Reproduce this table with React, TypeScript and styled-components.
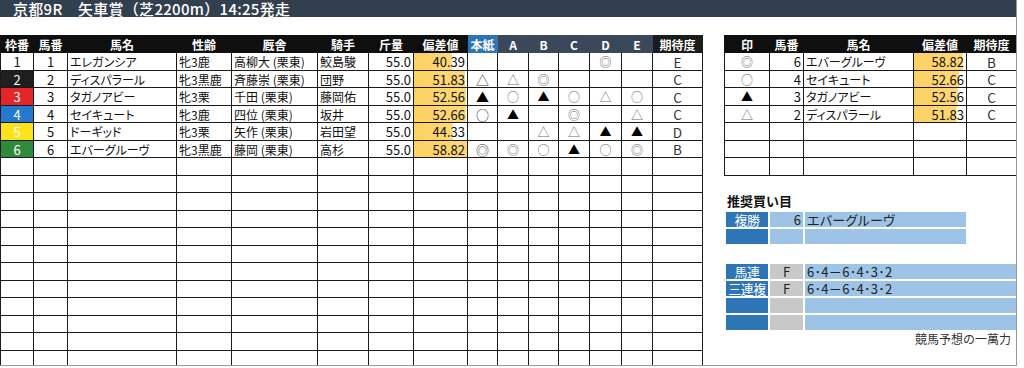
import React from 'react';
import styled, { createGlobalStyle } from 'styled-components';

const GlobalStyle = createGlobalStyle`
  body {
    margin: 0;
    background: #fff;
    font-family: "Noto Sans CJK JP", "Noto Sans", sans-serif;
  }
`;

const Frame = styled.div`
  width: 1017px;
  height: 366px;
  box-sizing: border-box;
  border-right: 1px solid #9a9a9a;
  border-bottom: 1px solid #9a9a9a;
  overflow: hidden;
  background: #fff;
`;

const TitleBar = styled.div`
  height: 17px;
  line-height: 17px;
  background: #323f4f;
  color: #fff;
  font-size: 15px;
  font-weight: 500;
  padding-left: 13px;
  letter-spacing: 0.3px;
  white-space: pre;
  overflow: hidden;
`;

const Body = styled.div`
  display: flex;
  padding-top: 18px;
  height: 331px;
  box-sizing: border-box;
`;

const Table = styled.table<{ $width: number }>`
  width: ${(p) => p.$width}px;
  table-layout: fixed;
  border-collapse: collapse;
  font-size: 12px;
  color: #111;
  font-feature-settings: 'palt';
  flex-shrink: 0;

  tbody tr:nth-child(odd) {
    height: 18px;
  }
  tbody tr:nth-child(even) {
    height: 17px;
  }
`;

const HeadRow = styled.tr`
  height: 17px;
`;

const Th = styled.th<{ $bg?: string }>`
  background: ${(p) => p.$bg || '#0f0f0f'};
  color: #fff;
  font-weight: bold;
  font-size: 12px;
  padding: 0;
  border: 1px solid ${(p) => p.$bg || '#0f0f0f'};
  line-height: 15px;
  text-align: center;
  white-space: nowrap;
  overflow: hidden;
`;

const Td = styled.td<{ $align?: string; $bg?: string; $fg?: string; $pad?: number }>`
  border: 1px solid #1a1a1a;
  padding: 0 ${(p) => p.$pad ?? 2}px;
  text-align: ${(p) => p.$align || 'left'};
  background: ${(p) => p.$bg || 'transparent'};
  color: ${(p) => p.$fg || '#111'};
  line-height: 15px;
  white-space: nowrap;
  overflow: hidden;
  font-size: 12px;
`;

const NumTd = styled(Td)`
  font-size: 13px;
  font-feature-settings: normal;
`;

const ScoreTd = styled(Td)`
  font-size: 13px;
  background-repeat: no-repeat;
  background-image: linear-gradient(to right, #fcd163, #fdd878);
`;

const Mark = styled.span<{ $big?: boolean; $solid?: boolean }>`
  font-size: ${(p) => (p.$big ? 13 : 12)}px;
  color: ${(p) => (p.$solid ? '#000' : p.$big ? '#333' : '#6a6a6a')};
  line-height: 14px;
`;

const RankTd = styled(Td)`
  font-size: 13.5px;
  line-height: 14px;
  color: #333;
`;

const RightPanel = styled.div`
  display: flex;
  flex-direction: column;
  margin-left: 21px;
  width: 292px;
`;

const SectionTitle = styled.div`
  margin-top: 16px;
  height: 18px;
  line-height: 18px;
  padding-left: 3px;
  font-size: 13px;
  font-weight: bold;
  color: #111;
`;

const BetBox = styled.div<{ $width: number; $top: number }>`
  display: grid;
  grid-template-columns: 42px 33px 1fr;
  grid-auto-rows: 15px;
  gap: 2px;
  width: ${(p) => p.$width}px;
  margin-left: 2px;
  margin-top: ${(p) => p.$top}px;
  font-size: 13px;
  font-feature-settings: 'palt';
`;

const BetLabel = styled.div`
  background: #2e75b6;
  color: #fff;
  font-size: 13px;
  line-height: 15px;
  text-align: center;
  white-space: nowrap;
  letter-spacing: -0.5px;
  overflow: hidden;
`;

const BetKey = styled.div<{ $gray?: boolean; $align?: string }>`
  background: ${(p) => (p.$gray ? '#c8c8c8' : '#9dc3e6')};
  color: #222;
  line-height: 15px;
  text-align: ${(p) => p.$align || 'center'};
  padding: 0 2px;
`;

const BetValue = styled.div`
  background: #9dc3e6;
  color: #222;
  line-height: 15px;
  padding: 0 2px;
  white-space: nowrap;
  letter-spacing: 0.3px;
`;

const Footer = styled.div`
  margin-top: auto;
  text-align: right;
  font-size: 12px;
  line-height: 14px;
  color: #333;
  padding: 0 5px 2px 0;
`;

type Horse = {
  gate: number;
  num: number;
  name: string;
  sex: string;
  stable: string;
  jockey: string;
  weight: string;
  score: string;
  bar: number;
  marks: string[];
  rank: string;
};

const horses: Horse[] = [
  { gate: 1, num: 1, name: 'エレガンシア', sex: '牝3鹿', stable: '高柳大 (栗東)', jockey: '鮫島駿', weight: '55.0', score: '40.39', bar: 72, marks: ['', '', '', '', '◎', ''], rank: 'E' },
  { gate: 2, num: 2, name: 'ディスパラール', sex: '牝3黒鹿', stable: '斉藤崇 (栗東)', jockey: '団野', weight: '55.0', score: '51.83', bar: 96, marks: ['△', '△', '◎', '', '', ''], rank: 'C' },
  { gate: 3, num: 3, name: 'タガノアビー', sex: '牝3栗', stable: '千田 (栗東)', jockey: '藤岡佑', weight: '55.0', score: '52.56', bar: 98, marks: ['▲', '○', '▲', '○', '△', '○'], rank: 'C' },
  { gate: 4, num: 4, name: 'セイキュート', sex: '牝3鹿', stable: '四位 (栗東)', jockey: '坂井', weight: '55.0', score: '52.66', bar: 98, marks: ['○', '▲', '', '◎', '', '△'], rank: 'C' },
  { gate: 5, num: 5, name: 'ドーギッド', sex: '牝3栗', stable: '矢作 (栗東)', jockey: '岩田望', weight: '55.0', score: '44.33', bar: 73, marks: ['', '', '△', '△', '▲', '▲'], rank: 'D' },
  { gate: 6, num: 6, name: 'エバーグルーヴ', sex: '牝3黒鹿', stable: '藤岡 (栗東)', jockey: '高杉', weight: '55.0', score: '58.82', bar: 100, marks: ['◎', '◎', '○', '▲', '○', '◎'], rank: 'B' },
];

const gateColors: Record<number, { bg: string; fg: string }> = {
  1: { bg: '#ffffff', fg: '#111' },
  2: { bg: '#1f1f1f', fg: '#fff' },
  3: { bg: '#e2262a', fg: '#fff' },
  4: { bg: '#2677d0', fg: '#fff' },
  5: { bg: '#fde21c', fg: '#fff' },
  6: { bg: '#2f8a3b', fg: '#fff' },
};

const picks = [
  { mark: '◎', num: 6, name: 'エバーグルーヴ', score: '58.82', bar: 94, rank: 'B' },
  { mark: '○', num: 4, name: 'セイキュート', score: '52.66', bar: 87, rank: 'C' },
  { mark: '▲', num: 3, name: 'タガノアビー', score: '52.56', bar: 84, rank: 'C' },
  { mark: '△', num: 2, name: 'ディスパラール', score: '51.83', bar: 82, rank: 'C' },
];

const leftCols = [33, 34, 109, 55, 86, 51, 45, 54, 30, 31, 30, 31, 32, 31, 50];
const rightCols = [45, 34, 110, 53, 50];

function MarkCell({ mark, big }: { mark: string; big?: boolean }) {
  if (!mark) return <Td />;
  return (
    <Td $align="center" $pad={0}>
      <Mark $big={big} $solid={mark === '▲'}>
        {mark}
      </Mark>
    </Td>
  );
}

function RaceTable() {
  const empty = Array.from({ length: 12 });
  return (
    <Table $width={702}>
      <colgroup>
        {leftCols.map((w, i) => (
          <col key={i} style={{ width: w }} />
        ))}
      </colgroup>
      <thead>
        <HeadRow>
          <Th>枠番</Th>
          <Th>馬番</Th>
          <Th>馬名</Th>
          <Th>性齢</Th>
          <Th>厩舎</Th>
          <Th>騎手</Th>
          <Th>斤量</Th>
          <Th>偏差値</Th>
          <Th $bg="#2e75b6">本紙</Th>
          <Th $bg="#3b4859">A</Th>
          <Th $bg="#3b4859">B</Th>
          <Th $bg="#3b4859">C</Th>
          <Th $bg="#3b4859">D</Th>
          <Th $bg="#3b4859">E</Th>
          <Th $bg="#1c1c1c">期待度</Th>
        </HeadRow>
      </thead>
      <tbody>
        {horses.map((h) => (
          <tr key={h.num}>
            <NumTd $align="center" $bg={gateColors[h.gate].bg} $fg={gateColors[h.gate].fg}>
              {h.gate}
            </NumTd>
            <NumTd $align="center">{h.num}</NumTd>
            <Td>{h.name}</Td>
            <Td>{h.sex}</Td>
            <Td>{h.stable}</Td>
            <Td>{h.jockey}</Td>
            <NumTd $align="right">{h.weight}</NumTd>
            <ScoreTd $align="right" style={{ backgroundSize: `${h.bar}% 100%` }}>
              {h.score}
            </ScoreTd>
            {h.marks.map((m, i) => (
              <MarkCell key={i} mark={m} big={i === 0} />
            ))}
            <RankTd $align="center">{h.rank}</RankTd>
          </tr>
        ))}
        {empty.map((_, r) => (
          <tr key={`e${r}`}>
            {leftCols.map((_, c) => (
              <Td key={c} />
            ))}
          </tr>
        ))}
      </tbody>
    </Table>
  );
}

function PickTable() {
  const empty = Array.from({ length: 3 });
  return (
    <Table $width={292}>
      <colgroup>
        {rightCols.map((w, i) => (
          <col key={i} style={{ width: w }} />
        ))}
      </colgroup>
      <thead>
        <HeadRow>
          <Th>印</Th>
          <Th>馬番</Th>
          <Th>馬名</Th>
          <Th>偏差値</Th>
          <Th>期待度</Th>
        </HeadRow>
      </thead>
      <tbody>
        {picks.map((p) => (
          <tr key={p.num}>
            <MarkCell mark={p.mark} />
            <NumTd $align="right">{p.num}</NumTd>
            <Td>{p.name}</Td>
            <ScoreTd $align="right" style={{ backgroundSize: `${p.bar}% 100%` }}>
              {p.score}
            </ScoreTd>
            <RankTd $align="center">{p.rank}</RankTd>
          </tr>
        ))}
        {empty.map((_, r) => (
          <tr key={`e${r}`}>
            {rightCols.map((_, c) => (
              <Td key={c} />
            ))}
          </tr>
        ))}
      </tbody>
    </Table>
  );
}

export default function App() {
  return (
    <>
      <GlobalStyle />
      <Frame>
        <TitleBar>{'京都9R　矢車賞（芝2200m）14:25発走'}</TitleBar>
        <Body>
          <RaceTable />
          <RightPanel>
            <PickTable />
            <SectionTitle>推奨買い目</SectionTitle>
            <BetBox $width={240} $top={2}>
              <BetLabel>複勝</BetLabel>
              <BetKey $align="right">6</BetKey>
              <BetValue>エバーグルーヴ</BetValue>
              <BetLabel />
              <BetKey />
              <BetValue />
            </BetBox>
            <BetBox $width={290} $top={20}>
              <BetLabel>馬連</BetLabel>
              <BetKey $gray>F</BetKey>
              <BetValue>6･4－6･4･3･2</BetValue>
              <BetLabel>三連複</BetLabel>
              <BetKey $gray>F</BetKey>
              <BetValue>6･4－6･4･3･2</BetValue>
              <BetLabel />
              <BetKey $gray />
              <BetValue />
              <BetLabel />
              <BetKey $gray />
              <BetValue />
            </BetBox>
            <Footer>競馬予想の一萬力</Footer>
          </RightPanel>
        </Body>
      </Frame>
    </>
  );
}
